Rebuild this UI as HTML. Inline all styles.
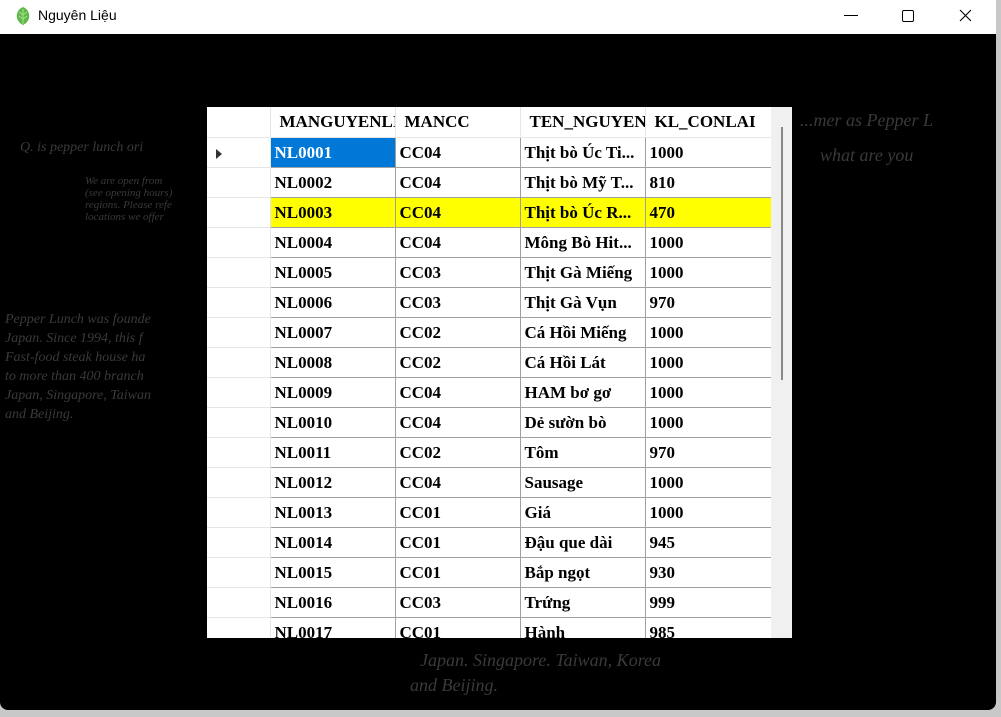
<!DOCTYPE html>
<html><head><meta charset="utf-8"><style>
body{margin:0;width:1001px;height:717px;background:#c8c8c8;overflow:hidden;position:relative;font-family:"Liberation Serif",serif}
.win{position:absolute;left:0;top:0;width:996px;height:710px;background:#000;border-radius:0 0 8px 8px;overflow:hidden}
.title{position:absolute;left:0;top:0;width:996px;height:34px;background:#fff;font-family:"Liberation Sans",sans-serif;font-size:14px}
.title .t{position:absolute;left:38px;top:7px;color:#000}
.sk{position:absolute;color:#3a3a3a;font-family:"Liberation Serif",serif;font-style:italic;font-size:14px}
.grid{position:absolute;left:207px;top:107px;width:585px;height:531px;background:#f0f0f0;overflow:hidden}
table{border-collapse:collapse;position:absolute;left:0;top:0;table-layout:fixed;width:564px}
td{height:29px;border:1px solid #a0a0a0;background:#fff;font-weight:bold;font-size:17px;padding:0 0 0 4px;white-space:nowrap;overflow:hidden;border-top:none;border-left:none}
td.h{border:1px solid #e6e6e6;border-top:none;border-left:none;background:#fff}
tr.hd td{height:30px;border-color:#e6e6e6;padding-left:9px}
tr.y td{background:#ff0}
td.sel{background:#0078d7;color:#fff}
.sb{position:absolute;left:564px;top:0;width:21px;height:531px;background:#f0f0f0}
.thumb{position:absolute;left:10px;top:20px;width:2px;height:253px;background:#888}
</style></head><body>
<div class="win">
<div class="title">
<svg style="position:absolute;left:14px;top:6px" width="18" height="20" viewBox="0 0 18 20"><path d="M9 1C4 3 2 8 3 12c1 4 4 6 6 7 2-1 5-3 6-7 1-4-1-9-6-11z" fill="#5fb84a"/><path d="M9 3v15M9 9l-4-3M9 9l4-3M9 13l-4-3M9 13l4-3" stroke="#a7e08c" stroke-width="1" fill="none"/></svg>
<span class="t">Nguyên Liệu</span>
<svg style="position:absolute;left:840px;top:8px" width="140" height="18"><path d="M4 7.5h14" stroke="#000" stroke-width="1"/><rect x="62.5" y="2.5" width="11" height="11" rx="1.5" fill="none" stroke="#000"/><path d="M120 2l11 11M131 2l-11 11" stroke="#000" stroke-width="1.1"/></svg>
</div>
<div class="sk" style="left:20px;top:140px">Q. is pepper lunch ori</div>
<div class="sk" style="left:85px;top:175px;font-size:11px">We are open from<br>(see opening hours)<br>regions. Please refe<br>locations we offer</div>
<div class="sk" style="left:5px;top:310px;line-height:19px">Pepper Lunch was founde<br>Japan. Since 1994, this f<br>Fast-food steak house ha<br>to more than 400 branch<br>Japan, Singapore, Taiwan<br>and Beijing.</div>
<div class="sk" style="left:800px;top:110px;font-size:18px">...mer as Pepper L</div>
<div class="sk" style="left:820px;top:145px;font-size:18px">what are you</div>
<div class="sk" style="left:420px;top:650px;font-size:18px">Japan. Singapore. Taiwan, Korea</div>
<div class="sk" style="left:410px;top:675px;font-size:18px">and Beijing.</div>
<div class="grid">
<table>
<colgroup><col style="width:63px"><col style="width:125px"><col style="width:125px"><col style="width:125px"><col style="width:126px"></colgroup>
<tr class="hd"><td class="h"></td><td class="h">MANGUYENLI</td><td class="h">MANCC</td><td class="h">TEN_NGUYENI</td><td class="h">KL_CONLAI</td></tr>
<tr><td class="h"><svg width="10" height="12" style="margin-left:3px;vertical-align:middle"><path d="M2 1l6 5-6 5z" fill="#333"/></svg></td><td class="sel">NL0001</td><td>CC04</td><td>Thịt bò Úc Ti...</td><td>1000</td></tr>
<tr><td class="h"></td><td>NL0002</td><td>CC04</td><td>Thịt bò Mỹ T...</td><td>810</td></tr>
<tr class="y"><td class="h" style="background:#fff"></td><td>NL0003</td><td>CC04</td><td>Thịt bò Úc R...</td><td>470</td></tr>
<tr><td class="h"></td><td>NL0004</td><td>CC04</td><td>Mông Bò Hit...</td><td>1000</td></tr>
<tr><td class="h"></td><td>NL0005</td><td>CC03</td><td>Thịt Gà Miếng</td><td>1000</td></tr>
<tr><td class="h"></td><td>NL0006</td><td>CC03</td><td>Thịt Gà Vụn</td><td>970</td></tr>
<tr><td class="h"></td><td>NL0007</td><td>CC02</td><td>Cá Hồi Miếng</td><td>1000</td></tr>
<tr><td class="h"></td><td>NL0008</td><td>CC02</td><td>Cá Hồi Lát</td><td>1000</td></tr>
<tr><td class="h"></td><td>NL0009</td><td>CC04</td><td>HAM bơ gơ</td><td>1000</td></tr>
<tr><td class="h"></td><td>NL0010</td><td>CC04</td><td>Dẻ sườn bò</td><td>1000</td></tr>
<tr><td class="h"></td><td>NL0011</td><td>CC02</td><td>Tôm</td><td>970</td></tr>
<tr><td class="h"></td><td>NL0012</td><td>CC04</td><td>Sausage</td><td>1000</td></tr>
<tr><td class="h"></td><td>NL0013</td><td>CC01</td><td>Giá</td><td>1000</td></tr>
<tr><td class="h"></td><td>NL0014</td><td>CC01</td><td>Đậu que dài</td><td>945</td></tr>
<tr><td class="h"></td><td>NL0015</td><td>CC01</td><td>Bắp ngọt</td><td>930</td></tr>
<tr><td class="h"></td><td>NL0016</td><td>CC03</td><td>Trứng</td><td>999</td></tr>
<tr><td class="h"></td><td>NL0017</td><td>CC01</td><td>Hành</td><td>985</td></tr>
</table>
<div class="sb"><div class="thumb"></div></div>
</div>
</div>
</body></html>
